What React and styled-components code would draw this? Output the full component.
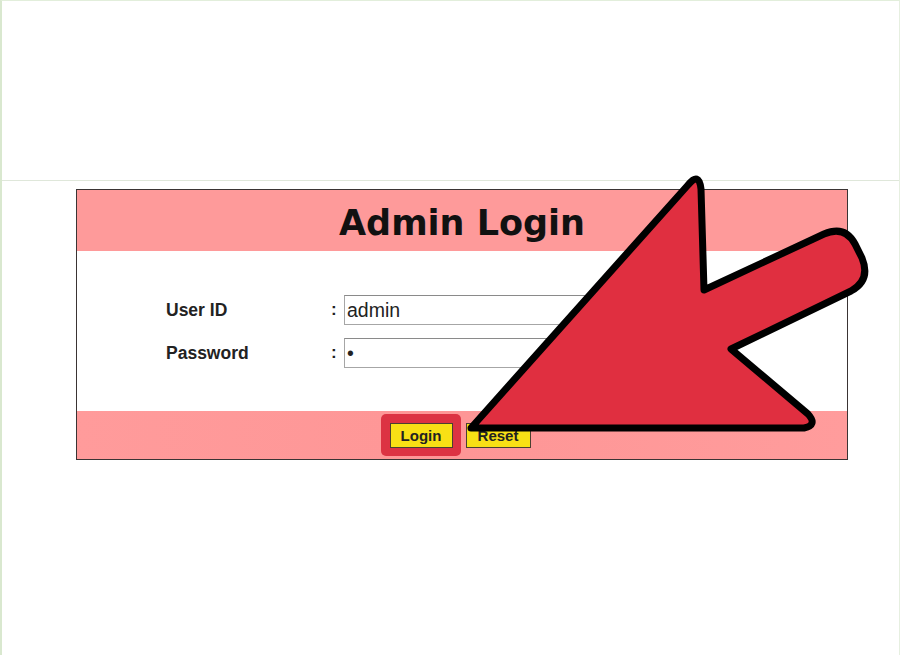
import React from "react";
import styled, { createGlobalStyle } from "styled-components";

const GlobalStyle = createGlobalStyle`
  html, body {
    margin: 0;
    padding: 0;
    background: #fff;
  }
  body {
    font-family: "Liberation Sans", Arial, sans-serif;
  }
`;

const Page = styled.div`
  position: relative;
  width: 900px;
  height: 655px;
  box-sizing: border-box;
  border-left: 2px solid #d9e8cf;
  border-top: 1px solid #e2eedb;
  border-right: 1px solid #e6efe0;
  background: #fff;
  overflow: hidden;
`;

const TopArea = styled.div`
  height: 179px;
  border-bottom: 1px solid #dfe7da;
`;

const Panel = styled.div`
  width: 772px;
  margin: 8px 0 0 74px;
  border: 1.5px solid #3a3434;
  box-sizing: border-box;
  background: #fff;
`;

const Header = styled.div`
  height: 61px;
  background: #fe9a9a;
  display: flex;
  align-items: center;
  justify-content: center;
  h1 {
    margin: 0;
    font-family: "DejaVu Sans", Verdana, sans-serif;
    font-size: 35px;
    font-weight: bold;
    color: #111;
    padding-top: 4px;
  }
`;

const Form = styled.div`
  display: grid;
  grid-template-columns: 165px 13px 300px;
  row-gap: 13px;
  align-items: center;
  padding: 44px 0 43px 89px;
`;

const Label = styled.span`
  font-size: 17.5px;
  font-weight: bold;
  color: #222;
`;

const Colon = styled.span`
  font-size: 17px;
  font-weight: bold;
  color: #222;
`;

const Input = styled.div`
  height: 30px;
  box-sizing: border-box;
  border: 1px solid #a6a6a6;
  border-top-color: #8a8a8a;
  display: flex;
  align-items: center;
  padding-left: 2px;
  font-size: 19.5px;
  color: #222;
`;

const Footer = styled.div`
  height: 48px;
  background: linear-gradient(90deg, #ff9b9b, #fe9696 50%, #ff9c9c);
  display: flex;
  align-items: center;
  justify-content: center;
  gap: 13px;
  padding-right: 4px;
`;

const Highlight = styled.span`
  position: relative;
  display: inline-flex;
  &::before {
    content: "";
    position: absolute;
    inset: -9px -8px -8px -9px;
    background: #dc3343;
    border-radius: 5px;
  }
`;

const Button = styled.span`
  position: relative;
  display: inline-flex;
  align-items: center;
  justify-content: center;
  width: ${(p) => p.$w}px;
  height: 25px;
  box-sizing: border-box;
  background: #f8e015;
  border: 1.5px solid #4a4030;
  font-size: 15px;
  font-weight: bold;
  color: #222;
`;

const Arrow = styled.svg`
  position: absolute;
  left: 0;
  top: 0;
  pointer-events: none;
`;

const App = () => {
  return (
    <>
      <GlobalStyle />
      <Page>
        <TopArea />
        <Panel>
          <Header>
            <h1>Admin Login</h1>
          </Header>
          <Form>
            <Label>User ID</Label>
            <Colon>:</Colon>
            <Input>admin</Input>
            <Label>Password</Label>
            <Colon>:</Colon>
            <Input>•</Input>
          </Form>
          <Footer>
            <Highlight>
              <Button $w={63}>Login</Button>
            </Highlight>
            <Button $w={65}>Reset</Button>
          </Footer>
        </Panel>
        <Arrow width="900" height="655" viewBox="0 0 900 655">
          <path
            d="M 469 427 L 686 184 Q 697 170 699 188 L 702 289 L 822 233 Q 843 224 853 243 L 860 257 Q 869 279 849 290 L 729 348 L 806 413 Q 816 424 802 427 Z"
            fill="#e02f40"
            stroke="#000"
            strokeWidth="7"
            strokeLinejoin="round"
          />
        </Arrow>
      </Page>
    </>
  );
};

export default App;
